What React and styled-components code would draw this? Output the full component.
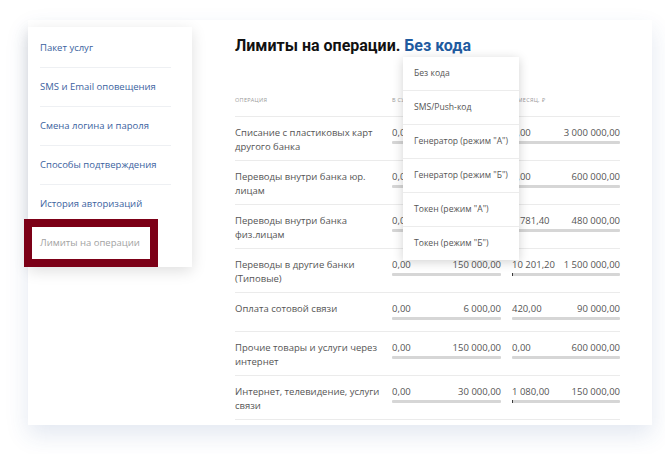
import React from 'react';
import styled, { createGlobalStyle } from 'styled-components';

const GlobalStyle = createGlobalStyle`
  html, body {
    margin: 0;
    padding: 0;
    background: #fff;
    font-family: 'Open Sans', 'Liberation Sans', sans-serif;
  }
`;

const menu = [
  'Пакет услуг',
  'SMS и Email оповещения',
  'Смена логина и пароля',
  'Способы подтверждения',
  'История авторизаций',
  'Лимиты на операции',
];

const codes = ['Без кода', 'SMS/Push-код', 'Генератор (режим "А")', 'Генератор (режим "Б")', 'Токен (режим "А")', 'Токен (режим "Б")'];

const rows = [
  { name: 'Списание с пластиковых карт другого банка', day: [0, 150000], month: [0, 3000000] },
  { name: 'Переводы внутри банка юр. лицам', day: [0, 150000], month: [0, 600000] },
  { name: 'Переводы внутри банка физ.лицам', day: [0, 150000], month: [1781.4, 480000] },
  { name: 'Переводы в другие банки (Типовые)', day: [0, 150000], month: [10201.2, 1500000] },
  { name: 'Оплата сотовой связи', day: [0, 6000], month: [420, 90000] },
  { name: 'Прочие товары и услуги через интернет', day: [0, 150000], month: [0, 600000] },
  { name: 'Интернет, телевидение, услуги связи', day: [0, 30000], month: [1080, 150000] },
];

const money = v => {
  const [int, frac] = v.toFixed(2).split('.');
  return `${int.replace(/\B(?=(\d{3})+(?!\d))/g, ' ')},${frac}`;
};

const Page = styled.div`
  width: 665px;
  height: 454px;
  padding: 20px 13px 0 28px;
  box-sizing: border-box;
  overflow: hidden;
`;

const Card = styled.div`
  display: flex;
  align-items: flex-start;
  height: 405px;
  background: #fff;
  box-shadow: 0 10px 22px rgba(40, 80, 150, 0.13);
`;

const Sidebar = styled.nav`
  width: 164px;
  flex-shrink: 0;
  margin-top: 7px;
  padding: 2px 21px 4px 12px;
  box-sizing: border-box;
  background: #fff;
  box-shadow: 0 4px 14px rgba(0, 0, 0, 0.13);
  position: relative;
  z-index: 1;
`;

const MenuItem = styled.div`
  position: relative;
  height: 39px;
  box-sizing: border-box;
  padding-top: 12px;
  font-size: 9.5px;
  line-height: 14px;
  color: ${p => (p.$active ? '#a2a2a2' : '#3b62a0')};
  border-bottom: ${p => (p.$last ? 'none' : '1px solid #eef0f3')};
`;

const Mark = styled.span`
  position: absolute;
  left: -16px;
  top: -5px;
  width: 134px;
  height: 48px;
  box-sizing: border-box;
  border: 8px solid #7c0017;
`;

const Content = styled.div`
  position: relative;
  flex: 1;
  padding: 16px 32px 0 43px;
`;

const Title = styled.h1`
  margin: 0 0 40px;
  font-family: Roboto, 'Open Sans', sans-serif;
  font-size: 16px;
  line-height: 20px;
  font-weight: 700;
  color: #111;
  span {
    color: #1f5b9f;
  }
`;

const Grid = styled.div`
  display: grid;
  grid-template-columns: 146px 109px 108px;
  column-gap: 11px;
  padding: ${p => (p.$head ? '0 0 12px' : '9px 0 6px')};
  border-bottom: 1px solid #ebebeb;
`;

const HeadCell = styled.div`
  font-size: 5.5px;
  line-height: 8px;
  letter-spacing: 0.3px;
  text-transform: uppercase;
  color: #9a9a9a;
`;

const Name = styled.div`
  font-size: 9.5px;
  line-height: 14px;
  color: #555;
`;

const Values = styled.div`
  display: flex;
  justify-content: space-between;
  font-size: 9.5px;
  line-height: 14px;
  color: #555;
`;

const Bar = styled.div`
  height: 3px;
  margin: 1px 0 5px;
  background: #d6d6d6;
  border-radius: 1px;
  div {
    height: 100%;
    background: #3a3a3a;
  }
`;

const Dropdown = styled.div`
  position: absolute;
  top: 37px;
  left: 211px;
  width: 116px;
  background: #fff;
  box-shadow: 0 2px 10px rgba(0, 0, 0, 0.18);
  z-index: 2;
`;

const Option = styled.div`
  padding: 10px 11px;
  font-size: 8.6px;
  line-height: 13px;
  white-space: nowrap;
  color: #555;
  border-bottom: 1px solid #ececec;
  &:last-child {
    border-bottom: none;
  }
`;

const Limit = ({ pair }) => (
  <div>
    <Values>
      <span>{money(pair[0])}</span>
      <span>{money(pair[1])}</span>
    </Values>
    <Bar>
      <div style={{ width: `${Math.max(0, Math.round((pair[0] / pair[1]) * 108 - 0.05))}px` }} />
    </Bar>
  </div>
);

const App = () => (
  <Page>
    <GlobalStyle />
    <Card>
      <Sidebar>
        {menu.map((m, i) => (
          <MenuItem key={m} $active={i === 5} $last={i >= 4}>
            {m}
            {i === 5 && <Mark />}
          </MenuItem>
        ))}
      </Sidebar>
      <Content>
        <Title>
          Лимиты на операции. <span>Без кода</span>
        </Title>
        <Grid $head>
          <HeadCell>Операция</HeadCell>
          <HeadCell>В сутки, ₽</HeadCell>
          <HeadCell>В месяц, ₽</HeadCell>
        </Grid>
        {rows.map(r => (
          <Grid key={r.name}>
            <Name>{r.name}</Name>
            <Limit pair={r.day} />
            <Limit pair={r.month} />
          </Grid>
        ))}
        <Dropdown>
          {codes.map(c => (
            <Option key={c}>{c}</Option>
          ))}
        </Dropdown>
      </Content>
    </Card>
  </Page>
);

export default App;
